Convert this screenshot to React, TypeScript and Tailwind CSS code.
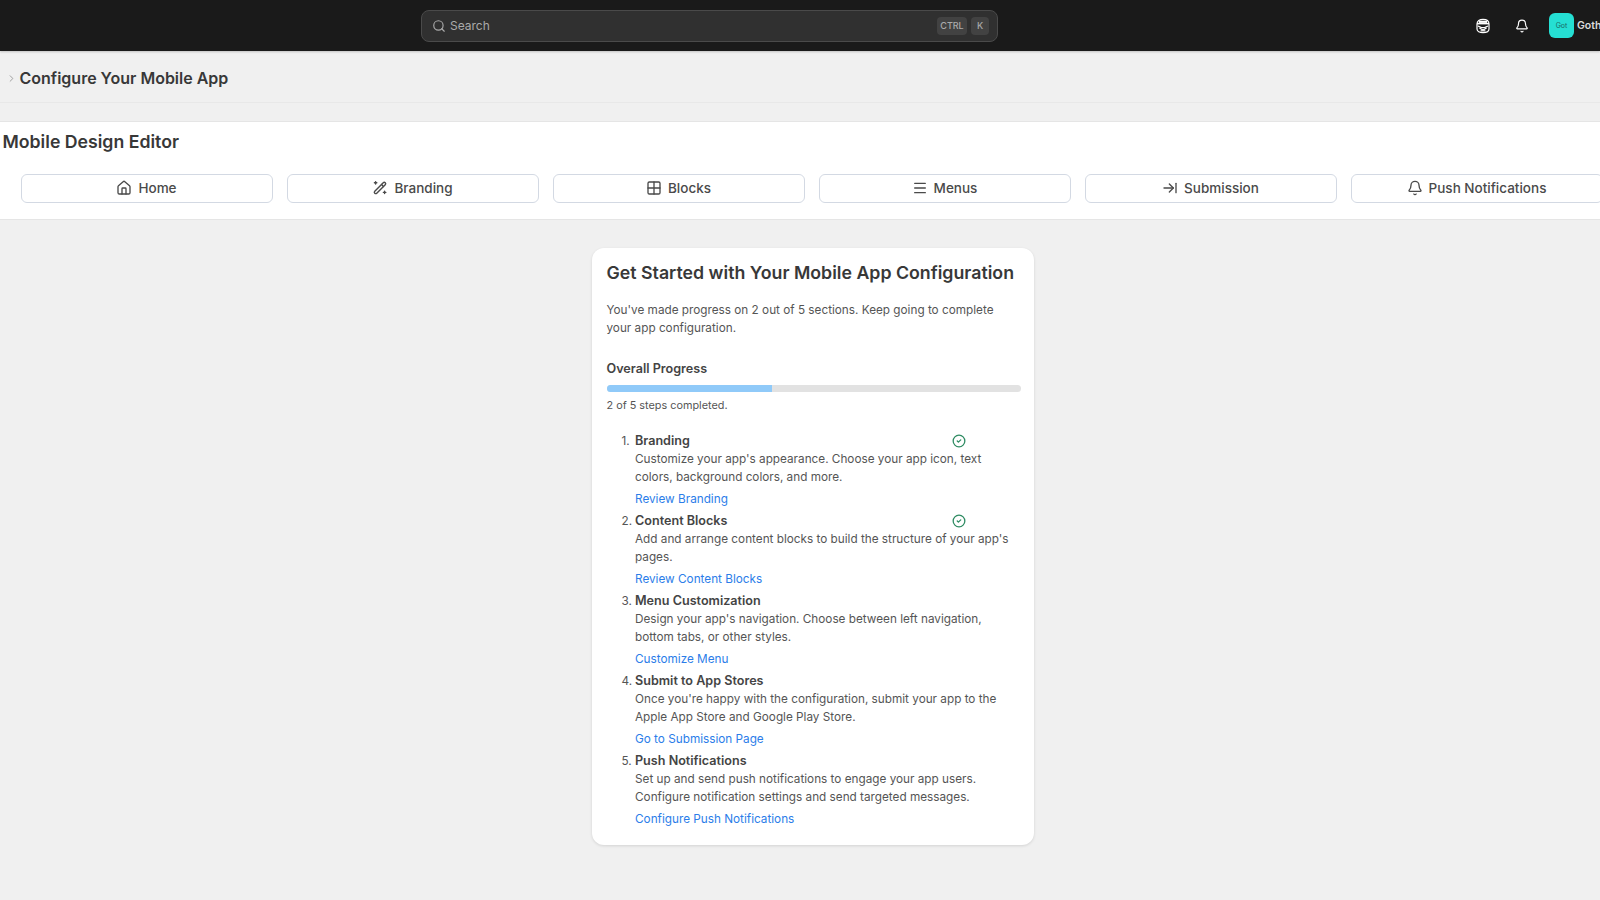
import { Search, ChevronRight, House, Grid2x2, Menu, ArrowRightToLine, Bell, CircleCheck } from "lucide-react";

function Wand({ size = 16 }: { size?: number }) {
  return (
    <svg width={size} height={size} viewBox="0 0 16 16" fill="none" stroke="currentColor" strokeWidth="1.4" strokeLinecap="round" strokeLinejoin="round">
      <rect x="0.6" y="6.6" width="14.8" height="2.8" rx="1.4" transform="rotate(-45 8 8)" />
      <path d="M9.6 4.6l1.8 1.8" />
      <path d="M3.6 1.6v2.4M2.4 2.8h2.4" />
      <path d="M12.6 11.2v2.4M11.4 12.4h2.4" />
    </svg>
  );
}

const tabs = [
  { label: "Home", Icon: House },
  { label: "Branding", Icon: Wand },
  { label: "Blocks", Icon: Grid2x2 },
  { label: "Menus", Icon: Menu },
  { label: "Submission", Icon: ArrowRightToLine },
  { label: "Push Notifications", Icon: Bell },
];

const steps = [
  { t: "Branding", d: "Customize your app's appearance. Choose your app icon, text colors, background colors, and more.", l: "Review Branding", done: true },
  { t: "Content Blocks", d: "Add and arrange content blocks to build the structure of your app's pages.", l: "Review Content Blocks", done: true },
  { t: "Menu Customization", d: "Design your app's navigation. Choose between left navigation, bottom tabs, or other styles.", l: "Customize Menu", done: false },
  { t: "Submit to App Stores", d: "Once you're happy with the configuration, submit your app to the Apple App Store and Google Play Store.", l: "Go to Submission Page", done: false },
  { t: "Push Notifications", d: "Set up and send push notifications to engage your app users. Configure notification settings and send targeted messages.", l: "Configure Push Notifications", done: false },
];

function Mask() {
  return (
    <svg className="shrink-0" width="16" height="16" viewBox="0 0 16 16" fill="none" stroke="currentColor" strokeWidth="1.2">
      <path d="M2 6C2 3 4.6 1.4 8 1.4S14 3 14 6v5c0 2.2-2.6 3.6-6 3.6S2 13.2 2 11z" />
      <path d="M2 5.6h12" strokeWidth="1.6" />
      <path d="M4 3.8h8" strokeWidth="2.2" />
      <path d="M3 8l3.4 1.6h3.2L13 8" />
      <path d="M4.4 10l3.6 2 3.6-2" />
      <path d="M5.6 12.8h4.8" />
    </svg>
  );
}

export default function App() {
  return (
    <div className="h-[900px] overflow-hidden bg-[#f0f0f0] font-['Inter',sans-serif] text-[#383838]">
      <header className="relative flex h-[51px] items-center overflow-hidden bg-[#1a1a1a] pl-[421px] shadow-[0_1px_2px_rgba(0,0,0,0.2)]">
        <div className="flex h-8 w-[577px] shrink-0 items-center rounded-lg border border-[#4a4a4a] bg-[#303030] pl-[10px] pr-[3px] text-[#aaaaaa]">
          <Search size={14} />
          <span className="ml-[4px] flex-1 text-[12px]">Search</span>
          <span className="mr-1 flex h-[18px] w-[30px] items-center justify-center rounded bg-[#424242] text-[9px] font-medium">CTRL</span>
          <span className="mr-[5px] flex h-[18px] w-[18px] items-center justify-center rounded bg-[#424242] text-[9px] font-medium">K</span>
        </div>
        <div className="ml-[477px] flex shrink-0 items-center text-white">
          <Mask />
          <Bell size={14} className="ml-[24px] shrink-0" />
          <span className="ml-[20px] flex h-[25px] w-[25px] shrink-0 items-center justify-center rounded-md bg-[#25dfd3] text-[7px] leading-none text-[#1a6b66]">Got</span>
          <span className="ml-[3px] whitespace-nowrap text-[10.5px] font-semibold text-[#dcdcdc]">Goth</span>
        </div>
      </header>

      <div className="flex h-[52px] items-center border-b border-[#e8e8e8] pl-[6px] pt-[3px]">
        <ChevronRight size={11} className="text-[#999]" />
        <h1 className="ml-[2.5px] text-[16px] font-semibold">Configure Your Mobile App</h1>
      </div>

      <section className="mt-[18px] h-[99px] border-y border-[#e5e5e5] bg-white">
        <h2 className="pl-[2.5px] pt-[5.5px] text-[17.7px] font-semibold leading-[27px]">Mobile Design Editor</h2>
        <div className="mt-[19px] flex gap-[14px] overflow-hidden pl-[20.5px]">
          {tabs.map(({ label, Icon }) => (
            <div key={label} className="flex h-[29.5px] w-[252px] shrink-0 items-center justify-center gap-[6px] rounded-md border border-[#d3d9e3] text-[13.5px] font-medium text-[#4a4a4a]">
              <Icon size={16} />
              {label}
            </div>
          ))}
        </div>
      </section>

      <main className="ml-[592px] mt-[28px] w-[442px] rounded-xl bg-white px-[14.5px] pb-[13px] pt-[13px] shadow-[0_1px_3px_rgba(0,0,0,0.12)]">
        <h3 className="text-[17.75px] font-semibold leading-[24px]">Get Started with Your Mobile App Configuration</h3>
        <p className="mt-[16px] text-[11.75px] leading-[18px] text-[#555]">
          You've made progress on 2 out of 5 sections. Keep going to complete your app configuration.
        </p>
        <div className="mt-[23px] text-[12.6px] font-semibold leading-[18px] text-[#444]">Overall Progress</div>
        <div className="mt-[7px] h-[7px] w-[414.5px] overflow-hidden rounded-full bg-[#e2e2e2]">
          <div className="h-full w-[40%] bg-[#90caf9]" />
        </div>
        <div className="mt-[4px] text-[10.85px] leading-[18px] text-[#555]">2 of 5 steps completed.</div>
        <ol className="mt-[18px]">
          {steps.map((s, i) => (
            <li key={s.t} className="relative flex h-[80px] text-[11.75px] leading-[18px] text-[#555]">
              <span className="w-[28.5px] shrink-0 pl-[15px]">{i + 1}.</span>
              <div className="flex-1">
                <div className="flex items-center">
                  <span className="w-[317px] text-[12.6px] font-semibold text-[#444]">{s.t}</span>
                  {s.done && <CircleCheck size={14} strokeWidth={2.2} className="text-[#2e8b62]" />}
                </div>
                <p>{s.d}</p>
                <a className="mt-[4px] block text-[#2b7de9]">{s.l}</a>
              </div>
            </li>
          ))}
        </ol>
      </main>
    </div>
  );
}
